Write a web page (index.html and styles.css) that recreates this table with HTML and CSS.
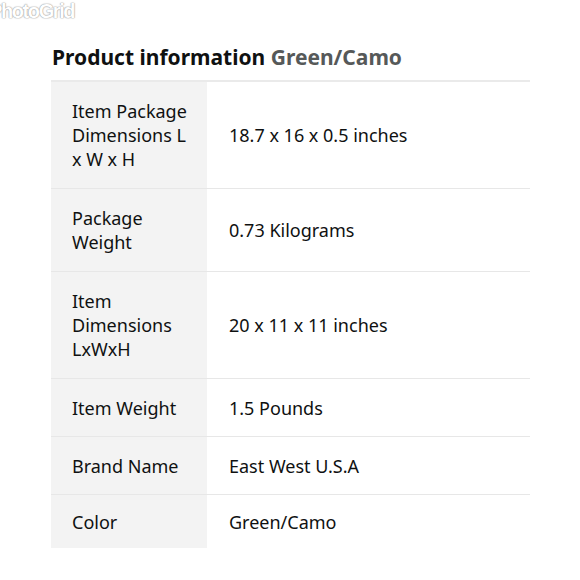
FILE: index.html
```html
<!DOCTYPE html>
<html>
<head>
<meta charset="utf-8">
<link rel="stylesheet" href="styles.css">
</head>
<body>
<div class="watermark">PhotoGrid</div>
<main class="page">
  <h1 class="title">Product information <span class="variant">Green/Camo</span></h1>
  <table class="specs">
    <tr><th>Item Package Dimensions L x W x H</th><td>18.7 x 16 x 0.5 inches</td></tr>
    <tr><th>Package Weight</th><td>0.73 Kilograms</td></tr>
    <tr><th>Item Dimensions LxWxH</th><td>20 x 11 x 11 inches</td></tr>
    <tr class="single"><th>Item Weight</th><td>1.5 Pounds</td></tr>
    <tr class="single"><th>Brand Name</th><td>East West U.S.A</td></tr>
    <tr><th>Color</th><td>Green/Camo</td></tr>
  </table>
</main>
</body>
</html>
```
FILE: styles.css
```css
html, body { margin: 0; padding: 0; background: #fff; }
body { font-family: "Noto Sans", "Open Sans", sans-serif; color: #0f1111; }
.watermark {
  position: absolute; left: -11px; top: 0;
  font-family: "Liberation Sans", sans-serif; font-weight: bold; font-size: 20px;
  color: #fff; letter-spacing: -1.4px;
  text-shadow: 0 0 1px #999, 0 0 1px #aaa, 0 0 2px #ccc;
}
.page { padding: 41px 50px 0 51px; }
.title { margin: 0 0 7px 1px; font-size: 21px; font-weight: 700; line-height: 32px; color: #0f1111; }
.variant { color: #565959; }
.specs { border-collapse: collapse; width: 479px; }
.specs tr { border-top: 1px solid #e7e7e7; }
.specs tr:first-child { border-top: 2px solid #eaeaea; }
.specs th, .specs td { font-size: 18px; line-height: 24px; padding: 17px 0; text-align: left; vertical-align: middle; font-weight: 400; }
.specs th { background: #f3f3f3; width: 120px; padding-left: 21px; padding-right: 15px; }
.specs td { padding-left: 22px; }
.specs tr.single th, .specs tr.single td { padding-bottom: 16px; }
.specs tr:last-child th, .specs tr:last-child td { padding-top: 15px; padding-bottom: 14px; }
```
